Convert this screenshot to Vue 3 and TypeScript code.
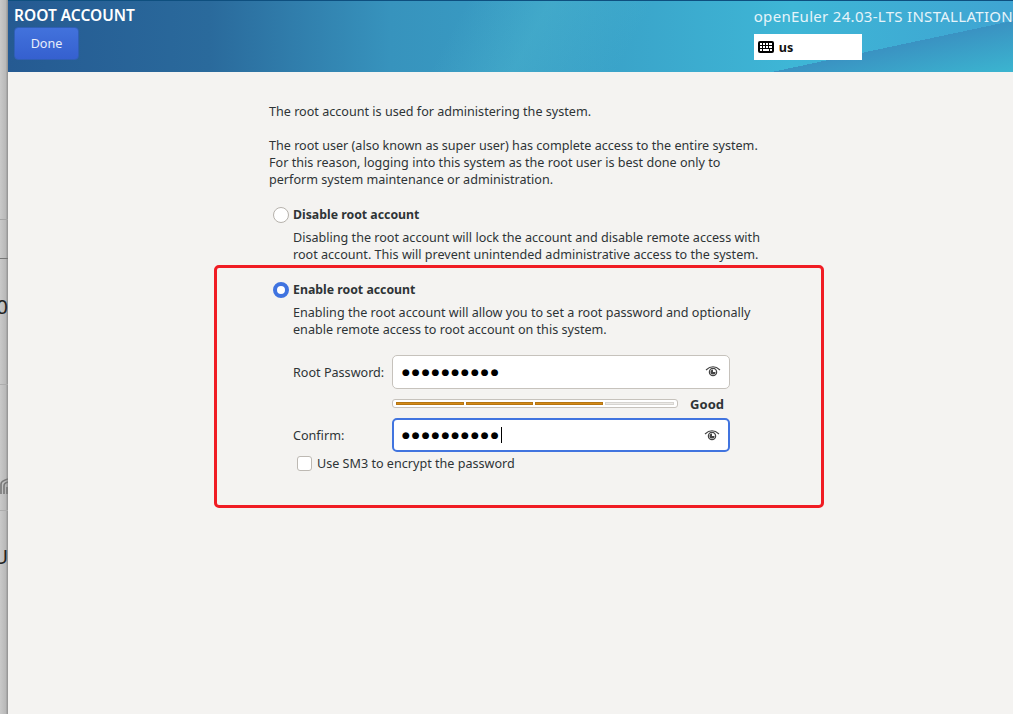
<script setup lang="ts">
const passwordDots = "●●●●●●●●●●";
const segments = [true, true, true, false];
</script>

<template>
  <main class="page">
    <aside class="behind">
      <span class="behind-line line-a"></span>
      <span class="behind-line line-b"></span>
      <span class="behind-char char-a">0</span>
      <span class="behind-line line-c"></span>
      <svg class="behind-icon" width="8" height="20" viewBox="0 0 8 20">
        <path d="M1 18V8q0-3 7-5M4 18V10q0-3 4-4M7 18v-7" fill="none" stroke="#777" stroke-width="1.6" />
      </svg>
      <span class="behind-line line-d"></span>
      <span class="behind-char char-b">U</span>
    </aside>

    <div class="window">
      <header class="topbar">
        <div class="topbar-left">
          <h1>ROOT ACCOUNT</h1>
          <button class="done">Done</button>
        </div>
        <div class="topbar-right">
          <div class="product">openEuler 24.03-LTS INSTALLATION</div>
          <div class="layout-box">
            <svg width="16" height="12" viewBox="0 0 16 12">
              <rect width="16" height="12" rx="2" fill="#000" />
              <g fill="#fff">
                <rect x="2" y="2" width="2" height="2" />
                <rect x="5" y="2" width="2" height="2" />
                <rect x="8" y="2" width="2" height="2" />
                <rect x="11" y="2" width="3" height="2" />
                <rect x="2" y="5" width="2" height="2" />
                <rect x="5" y="5" width="2" height="2" />
                <rect x="8" y="5" width="2" height="2" />
                <rect x="11" y="5" width="3" height="2" />
                <rect x="2" y="8" width="2" height="2" />
                <rect x="5" y="8" width="6" height="2" />
                <rect x="12" y="8" width="2" height="2" />
              </g>
            </svg>
            <span>us</span>
          </div>
        </div>
      </header>

      <section class="content">
        <div class="form">
          <p class="intro">The root account is used for administering the system.</p>
          <p class="intro">
            The root user (also known as super user) has complete access to the entire system.<br />
            For this reason, logging into this system as the root user is best done only to<br />
            perform system maintenance or administration.
          </p>

          <div class="option disable">
            <span class="radio"></span>
            <div>
              <div class="option-title">Disable root account</div>
              <p class="option-text">
                Disabling the root account will lock the account and disable remote access with<br />
                root account. This will prevent unintended administrative access to the system.
              </p>
            </div>
          </div>

          <div class="option enable">
            <span class="radio checked"></span>
            <div>
              <div class="option-title">Enable root account</div>
              <p class="option-text">
                Enabling the root account will allow you to set a root password and optionally<br />
                enable remote access to root account on this system.
              </p>
            </div>
          </div>

          <div class="password-grid">
            <label>Root Password:</label>
            <div class="entry">
              <span class="dots">{{ passwordDots }}</span>
              <svg class="eye" width="16" height="12" viewBox="0 0 16 12">
                <path d="M1 5Q8-1.500 15 5" fill="none" stroke="#444" stroke-width="1.100" />
                <circle cx="8" cy="7" r="3.600" fill="none" stroke="#444" stroke-width="1.300" />
                <path d="M8 4.500a2.500 2.500 0 1 0 2.500 2.500H8z" fill="#444" />
              </svg>
            </div>

            <div class="strength-row">
              <div class="meter">
                <span v-for="(on, i) in segments" :key="i" class="seg" :class="{ on }"></span>
              </div>
              <strong>Good</strong>
            </div>

            <label>Confirm:</label>
            <div class="entry focused">
              <span class="dots">{{ passwordDots }}</span><span class="caret"></span>
              <svg class="eye" width="16" height="12" viewBox="0 0 16 12">
                <path d="M1 5Q8-1.500 15 5" fill="none" stroke="#444" stroke-width="1.100" />
                <circle cx="8" cy="7" r="3.600" fill="none" stroke="#444" stroke-width="1.300" />
                <path d="M8 4.500a2.500 2.500 0 1 0 2.500 2.500H8z" fill="#444" />
              </svg>
            </div>
          </div>

          <label class="check-row">
            <span class="checkbox"></span>
            <span>Use SM3 to encrypt the password</span>
          </label>
        </div>

        <div class="annotation"></div>
      </section>
    </div>
  </main>
</template>

<style>
html,
body {
  margin: 0;
  overflow: hidden;
}
</style>

<style scoped>
* {
  box-sizing: border-box;
}

.page {
  display: flex;
  width: 1013px;
  height: 714px;
  overflow: hidden;
  font-family: "Noto Sans", "Open Sans", sans-serif;
  font-size: 12.6px;
  color: #2e3436;
  background: #f4f3f1;
}

.behind {
  position: relative;
  flex: 0 0 8px;
  overflow: hidden;
  background: linear-gradient(90deg, #c9c9c9, #b9b9b9 70%, #8f8f8f);
}

.behind-line {
  position: absolute;
  left: 0;
  width: 8px;
  height: 1px;
}

.line-a { top: 219px; background: #a5a5a5; }
.line-b { top: 258px; background: #777; }
.line-c { top: 384px; background: #adadad; }
.line-d { top: 510px; background: #adadad; }

.behind-char {
  position: absolute;
  right: 0;
  font-size: 20px;
  line-height: 20px;
  color: #222;
}

.char-a { top: 297px; }
.char-b { top: 547px; }

.behind-icon {
  position: absolute;
  top: 476px;
  left: 0;
}

.window {
  flex: 1;
  min-width: 0;
}

.topbar {
  display: flex;
  justify-content: space-between;
  height: 72px;
  overflow: hidden;
  border-top: 1px solid #0e4f7f;
  background:
    linear-gradient(168deg, transparent 82%, #3a92c2 82%, #3bb5d0 100%),
    linear-gradient(118deg, transparent 44%, rgba(90, 200, 215, 0.25) 52%, transparent 62%),
    linear-gradient(90deg, #255a92 0%, #2a6a9c 20%, #3793bd 38%, #3aa3c9 60%, #3eb6d6 78%, #3fa4d2 100%);
}

.topbar-left {
  padding: 5px 0 0 6px;
}

h1 {
  margin: 0 0 2px;
  font-size: 15.500px;
  line-height: 19px;
  font-weight: 600;
  color: #fff;
}

.done {
  display: block;
  width: 65px;
  height: 33px;
  padding: 0;
  border: 1px solid #2f5fb5;
  border-radius: 4px;
  background: linear-gradient(#4272dc, #3560cf);
  color: #e8eefb;
  font: inherit;
  font-size: 12.6px;
}

.topbar-right {
  flex: 0 0 238px;
  padding: 5px 0 0;
  white-space: nowrap;
}

.product {
  font-size: 15px;
  line-height: 20px;
  letter-spacing: 0.3px;
  color: #e6f4fa;
}

.layout-box {
  display: flex;
  align-items: center;
  gap: 5px;
  width: 108px;
  height: 26px;
  margin-top: 8px;
  padding-left: 4px;
  background: #fff;
  color: #111;
  font-weight: 700;
  font-size: 12.6px;
}

.content {
  position: relative;
  height: 642px;
}

.form {
  width: 540px;
  margin-left: 261px;
  padding-top: 31px;
}

.intro {
  margin: 0 0 17px;
  line-height: 17px;
}

.option {
  position: relative;
  display: flex;
  gap: 4px;
}

.disable {
  margin-top: 18px;
  margin-left: 4px;
}

.enable {
  margin-top: 18px;
  margin-left: 4px;
}

.radio {
  flex: none;
  width: 16px;
  height: 16px;
  margin-top: 1px;
  border: 1px solid #b6b2ac;
  border-radius: 50%;
  background: #fff;
}

.radio.checked {
  border: 4px solid #3f73e0;
}

.option-title {
  font-size: 12.3px;
  font-weight: 700;
  line-height: 18px;
}

.option-text {
  margin: 5px 0 0;
  line-height: 17px;
}

.password-grid {
  display: grid;
  grid-template-columns: 99px 338px;
  margin: 17px 0 0 24px;
  align-items: center;
}

.password-grid label {
  white-space: nowrap;
}

.entry {
  position: relative;
  display: flex;
  align-items: center;
  height: 34px;
  padding-left: 9px;
  border: 1px solid #c6c2bc;
  border-radius: 5px;
  background: #fff;
}

.entry.focused {
  border: 2px solid #4174df;
  padding-left: 8px;
}

.dots {
  font-family: "DejaVu Sans", sans-serif;
  font-size: 9px;
  letter-spacing: 2px;
  color: #000;
}

.caret {
  width: 1px;
  height: 16px;
  background: #000;
}

.eye {
  position: absolute;
  right: 8px;
  top: 9px;
}

.strength-row {
  grid-column: 2;
  display: flex;
  align-items: center;
  justify-content: space-between;
  width: 332px;
  height: 29px;
}

.strength-row strong {
  font-size: 13px;
}

.meter {
  display: flex;
  gap: 2px;
  width: 286px;
  height: 9px;
  padding: 2px 3px;
  border: 1px solid #c6c2bc;
  border-radius: 3px;
  background: #fff;
}

.seg {
  flex: 1;
  background: #eceae7;
  border: 1px solid #d6d4d0;
}

.seg.on {
  background: #d48a17;
  border: 0;
  box-shadow: inset 0 0 0 1px #b57512;
}

.check-row {
  display: flex;
  align-items: center;
  gap: 5px;
  margin: 3px 0 0 28px;
}

.checkbox {
  width: 15px;
  height: 15px;
  border: 1px solid #bdb9b3;
  border-radius: 3px;
  background: #fff;
}

.annotation {
  position: absolute;
  left: 206px;
  top: 193px;
  width: 610px;
  height: 243px;
  border: 3px solid #f01c23;
  border-radius: 5px;
  pointer-events: none;
}
</style>
